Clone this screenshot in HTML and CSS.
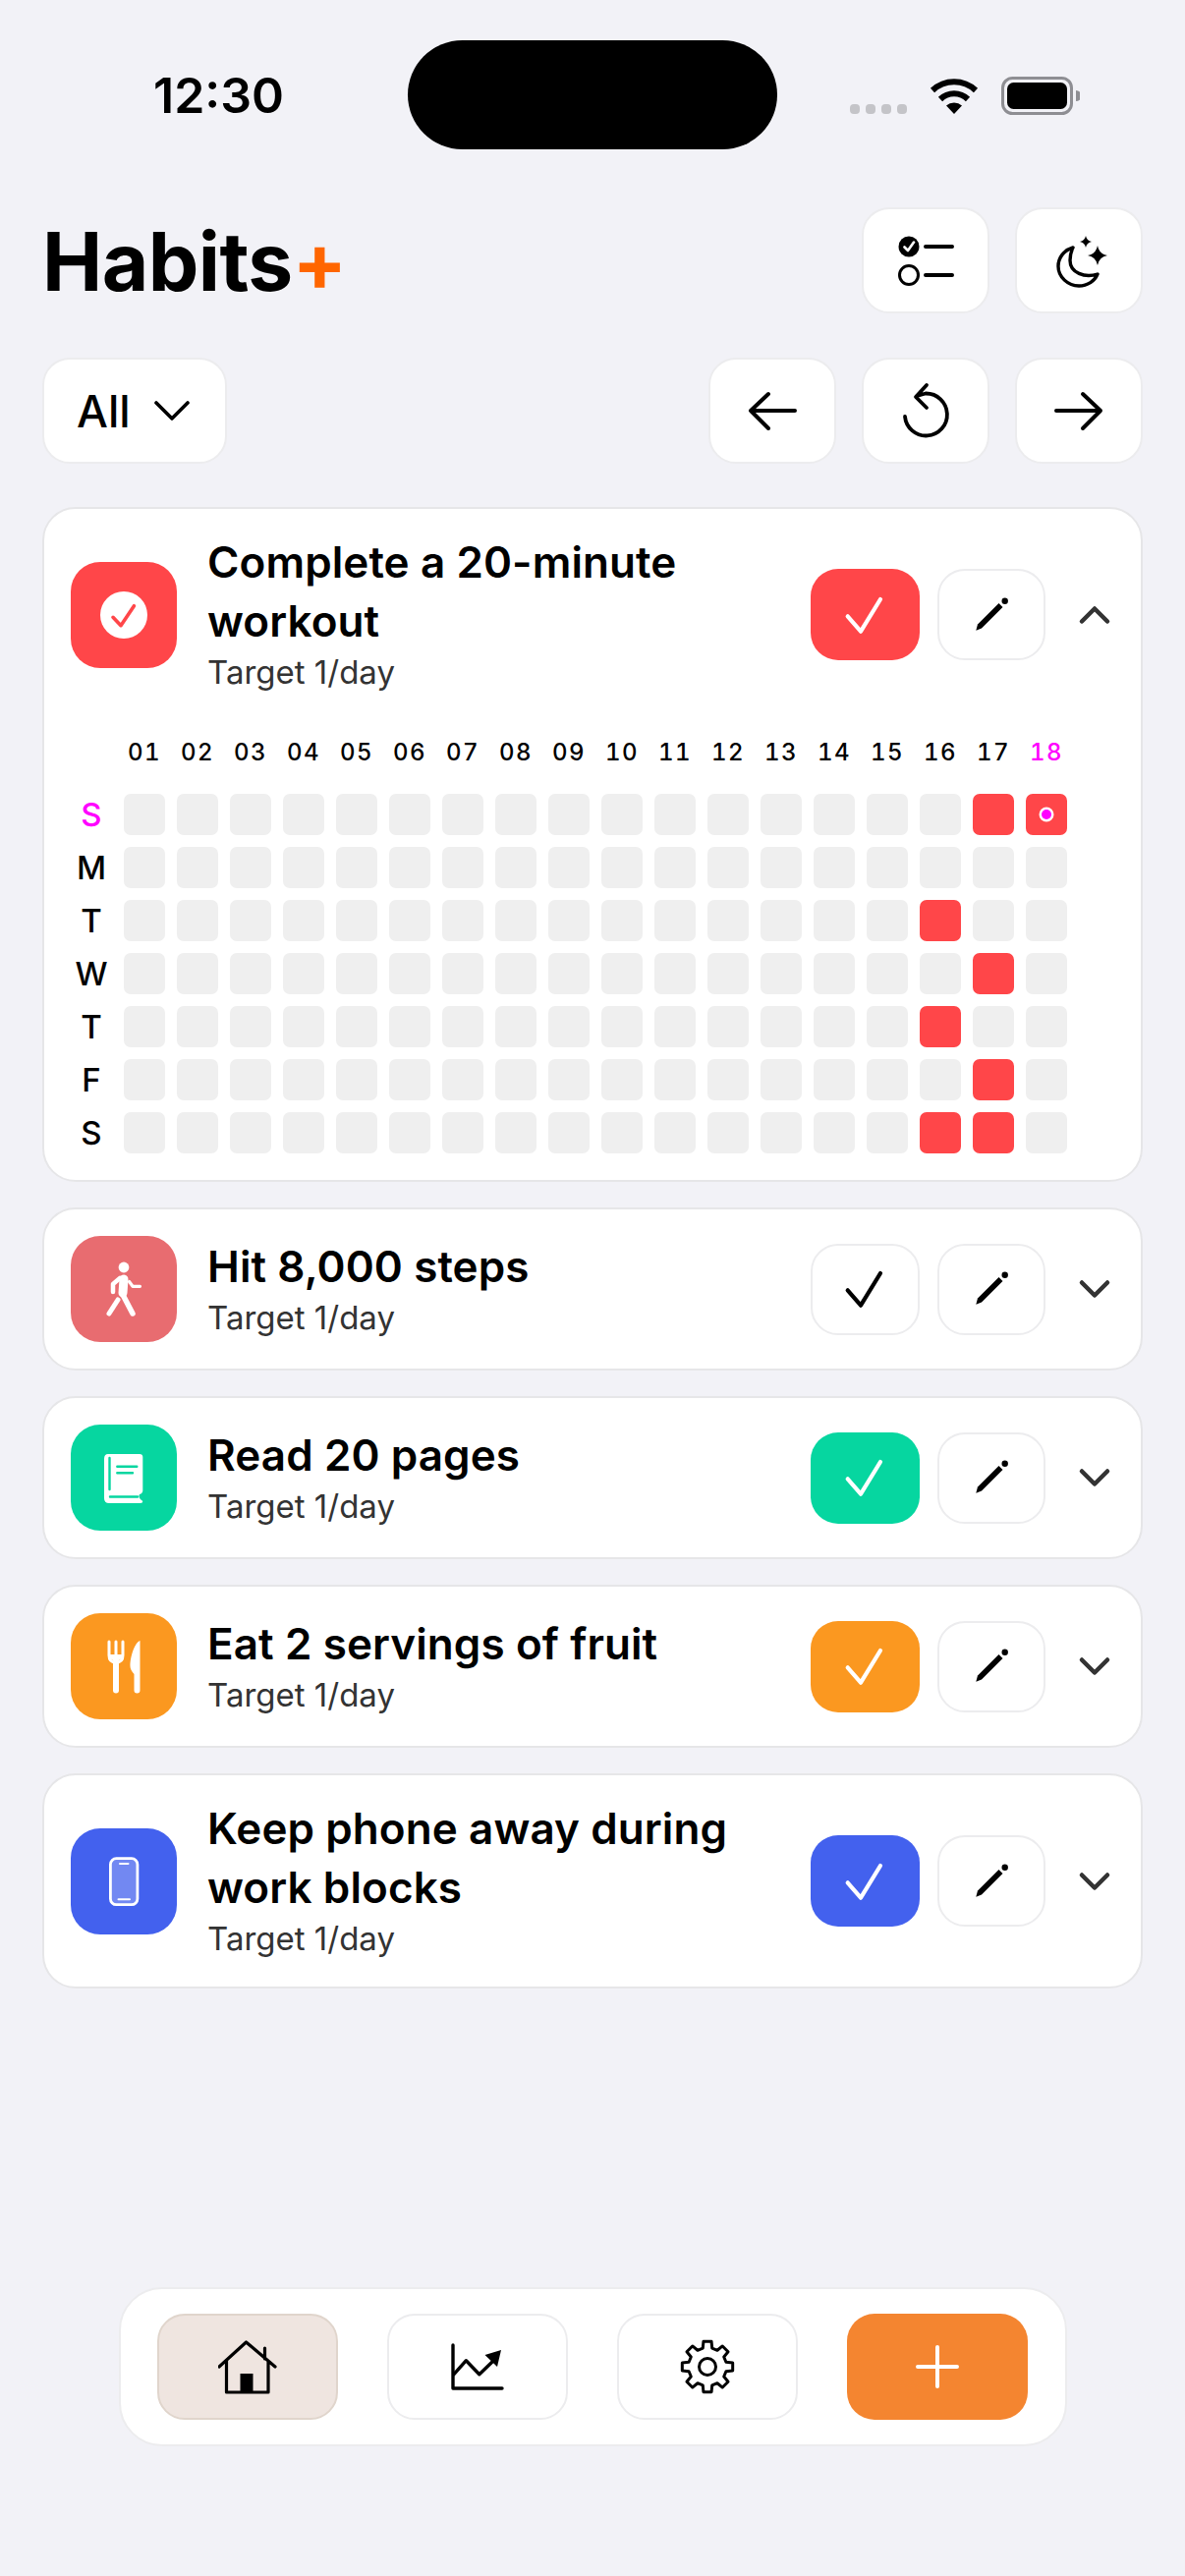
FILE: index.html
```html
<!DOCTYPE html>
<html lang="en">
<head>
  <meta charset="UTF-8">
  <meta name="viewport" content="width=device-width, initial-scale=1">
  <title>Habits+</title>
  <link rel="stylesheet" href="styles.css">
</head>
<body>
  <svg class="sprites" width="0" height="0">
    <symbol id="tick" viewBox="0 0 60 60"><path d="M11.7 31.3 25 46.7 45 14" fill="none" stroke="currentColor" stroke-width="4.2" stroke-linecap="round" stroke-linejoin="round"/></symbol>
    <symbol id="pencil" viewBox="0 0 60 60"><path d="M14.3 45.700 16 39.500 37.500 18 41.500 22 20 43.500Z" fill="currentColor"/><circle cx="43.700" cy="15.700" r="3.200" fill="currentColor"/></symbol>
    <symbol id="chev-down" viewBox="0 0 40 24"><path d="M7 5.500 20 18.500 33 5.500" fill="none" stroke="currentColor" stroke-width="4.500" stroke-linecap="round" stroke-linejoin="round"/></symbol>
    <symbol id="chev-up" viewBox="0 0 40 24"><path d="M7 18.500 20 5.500 33 18.500" fill="none" stroke="currentColor" stroke-width="4.500" stroke-linecap="round" stroke-linejoin="round"/></symbol>
  </svg>

  <div class="status">
    <div class="time">12:30</div>
    <div class="island"></div>
    <div class="signal"><span></span><span></span><span></span><span></span></div>
    <svg class="wifi" width="50" height="37" viewBox="0 0 50 37">
      <path d="M3 13A32 32 0 0 1 47 13M11 22A20 20 0 0 1 39 22" fill="none" stroke="#000" stroke-width="6"/>
      <path d="M25 37 17 28.500A12 12 0 0 1 33 28.500Z"/>
    </svg>
    <svg class="battery" width="80" height="39" viewBox="0 0 80 39">
      <rect x="1.500" y="1.500" width="70" height="36" rx="10" fill="none" stroke="#8e8e93" stroke-width="3"/>
      <rect x="6" y="6" width="61" height="27" rx="6.500"/>
      <path d="M76 14a5 5 0 0 1 0 11Z" fill="#8e8e93"/>
    </svg>
  </div>

  <main>
    <header class="top-row">
      <h1 class="logo">Habits<span>+</span></h1>
      <div class="btn-group">
        <button class="btn">
          <svg width="60" height="60" viewBox="0 0 60 60">
            <circle cx="13" cy="16" r="10.500"/>
            <path d="M8.500 16.500 12 20 18 11.500" fill="none" stroke="#fff" stroke-width="2.600" stroke-linecap="round" stroke-linejoin="round"/>
            <circle cx="13" cy="45" r="9.500" fill="none" stroke="#000" stroke-width="3"/>
            <path d="M30 16H57M30 45H57" stroke="#000" stroke-width="4" stroke-linecap="round"/>
          </svg>
        </button>
        <button class="btn">
          <svg width="60" height="60" viewBox="0 0 60 60">
            <path d="M24 17C14 20 9 28 9 36 9 47 19 56 30 56 39 56 46 51 49 44 36 48 21 43 21 30 21 25 22 21 24 17Z" fill="none" stroke="#000" stroke-width="3.400" stroke-linejoin="round"/>
            <path d="M49 15Q50.500 23.500 59 25 50.500 26.500 49 35 47.500 26.500 39 25 47.500 23.500 49 15Z"/>
            <path d="M37 5Q38 10 43 11 38 12 37 17 36 12 31 11 36 10 37 5Z"/>
          </svg>
        </button>
      </div>
    </header>

    <div class="top-row second">
      <button class="btn filter">All
        <svg width="36" height="22" viewBox="0 0 36 22"><path d="M2 3 18 19 34 3" fill="none" stroke="#000" stroke-width="3.600" stroke-linecap="round" stroke-linejoin="round"/></svg>
      </button>
      <div class="btn-group">
        <button class="btn">
          <svg width="60" height="60" viewBox="0 0 60 60"><path d="M53 30H8M26 13 8 30 26 48" fill="none" stroke="#000" stroke-width="4" stroke-linecap="round" stroke-linejoin="round"/></svg>
        </button>
        <button class="btn">
          <svg width="60" height="60" viewBox="0 0 60 60"><path d="M9 36A21.500 21.500 0 1 0 30 12.500L21 15M31 4 20 16 31 27" fill="none" stroke="#000" stroke-width="3.800" stroke-linecap="round" stroke-linejoin="round"/></svg>
        </button>
        <button class="btn">
          <svg width="60" height="60" viewBox="0 0 60 60"><path d="M7 30H52M34 13 52 30 34 48" fill="none" stroke="#000" stroke-width="4" stroke-linecap="round" stroke-linejoin="round"/></svg>
        </button>
      </div>
    </div>

    <section class="habits">
      <article class="card">
        <div class="habit-row">
          <div class="habit-icon red">
            <svg width="108" height="108" viewBox="0 0 108 108"><circle cx="54" cy="54" r="24" fill="#fff"/><path d="M43 56.300 51 64.700 64.400 44.700" fill="none" stroke="#ff4649" stroke-width="3.600" stroke-linecap="round" stroke-linejoin="round"/></svg>
          </div>
          <div class="habit-text">
            <h2>Complete a 20-minute workout</h2>
            <p>Target 1/day</p>
          </div>
          <button class="check red"><svg width="60" height="60"><use href="#tick"/></svg></button>
          <button class="edit"><svg width="60" height="60"><use href="#pencil"/></svg></button>
          <div class="toggle"><svg width="40" height="24"><use href="#chev-up"/></svg></div>
        </div>

        <div class="heatmap">
          <span></span>
          <span class="date">01</span><span class="date">02</span><span class="date">03</span><span class="date">04</span><span class="date">05</span><span class="date">06</span><span class="date">07</span><span class="date">08</span><span class="date">09</span><span class="date">10</span><span class="date">11</span><span class="date">12</span><span class="date">13</span><span class="date">14</span><span class="date">15</span><span class="date">16</span><span class="date">17</span><span class="date today">18</span>

          <span class="day today">S</span>
          <i></i><i></i><i></i><i></i><i></i><i></i><i></i><i></i><i></i><i></i><i></i><i></i><i></i><i></i><i></i><i></i><i class="done"></i><i class="done now"></i>

          <span class="day">M</span>
          <i></i><i></i><i></i><i></i><i></i><i></i><i></i><i></i><i></i><i></i><i></i><i></i><i></i><i></i><i></i><i></i><i></i><i></i>

          <span class="day">T</span>
          <i></i><i></i><i></i><i></i><i></i><i></i><i></i><i></i><i></i><i></i><i></i><i></i><i></i><i></i><i></i><i class="done"></i><i></i><i></i>

          <span class="day">W</span>
          <i></i><i></i><i></i><i></i><i></i><i></i><i></i><i></i><i></i><i></i><i></i><i></i><i></i><i></i><i></i><i></i><i class="done"></i><i></i>

          <span class="day">T</span>
          <i></i><i></i><i></i><i></i><i></i><i></i><i></i><i></i><i></i><i></i><i></i><i></i><i></i><i></i><i></i><i class="done"></i><i></i><i></i>

          <span class="day">F</span>
          <i></i><i></i><i></i><i></i><i></i><i></i><i></i><i></i><i></i><i></i><i></i><i></i><i></i><i></i><i></i><i></i><i class="done"></i><i></i>

          <span class="day">S</span>
          <i></i><i></i><i></i><i></i><i></i><i></i><i></i><i></i><i></i><i></i><i></i><i></i><i></i><i></i><i></i><i class="done"></i><i class="done"></i><i></i>
        </div>
      </article>

      <article class="card">
        <div class="habit-row">
          <div class="habit-icon rose">
            <svg width="108" height="108" viewBox="0 0 108 108" fill="none" stroke="#fff" stroke-linecap="round" stroke-linejoin="round">
              <circle cx="54" cy="32" r="5.400" fill="#fff" stroke="none"/>
              <path d="M54 44 53 58" stroke-width="9"/>
              <path d="M52 58 63 79" stroke-width="5.500"/>
              <path d="M48 65 39 79" stroke-width="5"/>
              <path d="M50 43 43 49 43 57" stroke-width="4.500"/>
              <path d="M59.500 46.500 63 51.300H70.500" stroke-width="3.200"/>
            </svg>
          </div>
          <div class="habit-text">
            <h2>Hit 8,000 steps</h2>
            <p>Target 1/day</p>
          </div>
          <button class="check"><svg width="60" height="60"><use href="#tick"/></svg></button>
          <button class="edit"><svg width="60" height="60"><use href="#pencil"/></svg></button>
          <div class="toggle"><svg width="40" height="24"><use href="#chev-down"/></svg></div>
        </div>
      </article>

      <article class="card">
        <div class="habit-row">
          <div class="habit-icon green">
            <svg width="108" height="108" viewBox="0 0 108 108">
              <path d="M38 30H70Q73.300 30 73.300 33V67Q73.300 70 70 71 68 74.500 73.300 78 73.300 80 71 80H39Q34 80 34 75V35Q34 30 38 30Z" fill="#fff"/>
              <path d="M39.500 34V66M40 73.500H68M47.300 42.700H67.300M47.300 49.300H63" fill="none" stroke="#06d6a0" stroke-width="2.400" stroke-linecap="round"/>
            </svg>
          </div>
          <div class="habit-text">
            <h2>Read 20 pages</h2>
            <p>Target 1/day</p>
          </div>
          <button class="check green"><svg width="60" height="60"><use href="#tick"/></svg></button>
          <button class="edit"><svg width="60" height="60"><use href="#pencil"/></svg></button>
          <div class="toggle"><svg width="40" height="24"><use href="#chev-down"/></svg></div>
        </div>
      </article>

      <article class="card">
        <div class="habit-row">
          <div class="habit-icon orange">
            <svg width="108" height="108" viewBox="0 0 108 108">
              <path d="M39 29V43Q39 50 46 50 53 50 53 43V29M46 29V50" fill="none" stroke="#fff" stroke-width="3" stroke-linecap="round"/>
              <path d="M40 42H52V46L46 50 40 46Z" fill="#fff"/>
              <path d="M46 50V78.500" stroke="#fff" stroke-width="6" stroke-linecap="round"/>
              <path d="M70.500 28C65 30 60.500 44 60.500 54 60.500 58 64.500 62 64.500 62V78.500A3 3 0 0 0 70.500 78.500Z" fill="#fff"/>
            </svg>
          </div>
          <div class="habit-text">
            <h2>Eat 2 servings of fruit</h2>
            <p>Target 1/day</p>
          </div>
          <button class="check orange"><svg width="60" height="60"><use href="#tick"/></svg></button>
          <button class="edit"><svg width="60" height="60"><use href="#pencil"/></svg></button>
          <div class="toggle"><svg width="40" height="24"><use href="#chev-down"/></svg></div>
        </div>
      </article>

      <article class="card">
        <div class="habit-row">
          <div class="habit-icon blue">
            <svg width="108" height="108" viewBox="0 0 108 108">
              <rect x="40.400" y="30.700" width="27.500" height="47" rx="6" fill="#fff" fill-opacity=".25" stroke="#fff" stroke-width="2.800"/>
              <path d="M50 36H58.500M48.500 72.300H60" stroke="#fff" stroke-width="2" stroke-linecap="round"/>
            </svg>
          </div>
          <div class="habit-text">
            <h2>Keep phone away during work blocks</h2>
            <p>Target 1/day</p>
          </div>
          <button class="check blue"><svg width="60" height="60"><use href="#tick"/></svg></button>
          <button class="edit"><svg width="60" height="60"><use href="#pencil"/></svg></button>
          <div class="toggle"><svg width="40" height="24"><use href="#chev-down"/></svg></div>
        </div>
      </article>
    </section>
  </main>

  <nav class="tabbar">
    <button class="tab active">
      <svg width="60" height="60" viewBox="0 0 60 60" fill="none" stroke="#000" stroke-width="3.200" stroke-linecap="round" stroke-linejoin="round">
        <path d="M1 30 28.500 5 58 30M8.500 24V56H51V24M47.500 11V22"/>
        <rect x="22.500" y="37" width="13" height="19" fill="#000" stroke="none"/>
      </svg>
    </button>
    <button class="tab">
      <svg width="60" height="60" viewBox="0 0 60 60" fill="none" stroke="#000" stroke-linecap="round" stroke-linejoin="round">
        <path d="M5 8V52H55" stroke-width="3.400"/>
        <path d="M6 37.700 18.400 23.700 31.800 37.700 45.800 24.300" stroke-width="3.400"/>
        <path d="M54 13 37.500 18 50 30Z" fill="#000" stroke="none"/>
      </svg>
    </button>
    <button class="tab">
      <svg width="60" height="60" viewBox="-30 -30 60 60" fill="none" stroke="#000" stroke-width="3" stroke-linejoin="round">
        <path d="M-4.720-18.920-4.070-25.680 4.070-25.680 4.720-18.920 10.040-16.720 15.280-21.040 21.040-15.280 16.720-10.040 18.920-4.720 25.680-4.070 25.680 4.070 18.920 4.720 16.720 10.040 21.040 15.280 15.280 21.040 10.040 16.720 4.720 18.920 4.070 25.680-4.070 25.680-4.720 18.920-10.040 16.720-15.280 21.040-21.040 15.280-16.720 10.040-18.920 4.720-25.680 4.070-25.680-4.070-18.920-4.720-16.720-10.040-21.040-15.280-15.280-21.040-10.040-16.720Z"/>
        <circle r="8.500"/>
      </svg>
    </button>
    <button class="tab add">
      <svg width="60" height="60" viewBox="0 0 60 60"><path d="M30 10V50M10 30H50" stroke="#fff" stroke-width="4" stroke-linecap="round"/></svg>
    </button>
  </nav>
</body>
</html>
```

FILE: styles.css
```css
:root {
  --bg: #f2f2f7;
  --text: #000;
  --muted: #333;
  --border: #ececee;
  --card-border: #e6e6e8;
  --red: #ff4649;
  --rose: #e86c70;
  --green: #06d6a0;
  --orange: #fb9820;
  --blue: #4361ee;
  --today: #ff00ff;
  --cell: #efefef;
}

* {
  box-sizing: border-box;
}

body {
  margin: 0;
  min-height: 100vh;
  display: flex;
  flex-direction: column;
  background: var(--bg);
  color: var(--text);
  font-family: Inter, "Liberation Sans", sans-serif;
}

button {
  font-family: inherit;
  color: inherit;
  padding: 0;
  cursor: pointer;
}

svg {
  display: block;
}

.sprites {
  position: absolute;
}

/* status bar */
.status {
  height: 152px;
  margin-bottom: 59px;
  padding: 41px 0 0 156px;
  display: flex;
  align-items: flex-start;
}

.time {
  width: 259px;
  margin-top: 31px;
  font-size: 50px;
  line-height: 50px;
  font-weight: 600;
}

.island {
  width: 376px;
  height: 111px;
  border-radius: 56px;
  background: #000;
}

.signal {
  display: flex;
  gap: 6px;
  margin: 65px 23px 0 74px;
}

.signal span {
  width: 10px;
  height: 10px;
  border-radius: 4px;
  background: #c4c4c8;
}

.wifi {
  margin: 38px 23px 0 0;
}

.battery {
  margin-top: 37px;
}

/* header */
main {
  padding: 0 43px;
}

.top-row {
  display: flex;
  justify-content: space-between;
  align-items: center;
  margin-bottom: 45px;
}

.top-row.second {
  margin-bottom: 44px;
}

.logo {
  margin: 0;
  padding-top: 3px;
  font-size: 82px;
  line-height: 105px;
  font-weight: 700;
  letter-spacing: -.6px;
}

.logo span {
  color: #ff6600;
}

.btn-group {
  display: flex;
  gap: 26px;
}

.btn {
  width: 130px;
  height: 108px;
  display: flex;
  align-items: center;
  justify-content: center;
  background: #fff;
  border: 2px solid var(--border);
  border-radius: 28px;
}

.filter {
  width: 188px;
  justify-content: flex-start;
  padding-left: 33px;
  gap: 24px;
  font-size: 45px;
  font-weight: 500;
}

/* habit cards */
.habits {
  display: flex;
  flex-direction: column;
  gap: 26px;
}

.card {
  padding: 27px;
  background: #fff;
  border: 2px solid var(--card-border);
  border-radius: 34px;
}

.habit-row {
  display: flex;
  align-items: center;
}

.habit-icon {
  flex: none;
  width: 108px;
  height: 108px;
  border-radius: 30px;
}

.red { background: var(--red); }
.rose { background: var(--rose); }
.green { background: var(--green); }
.orange { background: var(--orange); }
.blue { background: var(--blue); }

.habit-text {
  flex: 1;
  margin: 0 28px 0 31px;
  padding-bottom: 1px;
}

.habit-text h2 {
  margin: -3px 0 0;
  font-size: 44px;
  line-height: 60px;
  font-weight: 590;
  letter-spacing: .1px;
}

.habit-text p {
  margin: 2px 0 0;
  font-size: 33px;
  line-height: 41px;
  color: var(--muted);
}

.check,
.edit {
  flex: none;
  height: 93px;
  display: flex;
  align-items: center;
  justify-content: center;
  border-radius: 28px;
  border: 2px solid var(--border);
  background: #fff;
}

.check {
  width: 111px;
  margin-right: 18px;
  color: #000;
}

.edit {
  width: 110px;
  color: #000;
}

.check.red,
.check.green,
.check.orange,
.check.blue {
  border: 0;
  color: #fff;
}

.check.red { background: var(--red); }
.check.green { background: var(--green); }
.check.orange { background: var(--orange); }
.check.blue { background: var(--blue); }

.toggle {
  flex: none;
  width: 40px;
  margin-left: 30px;
  color: var(--muted);
}

/* history grid */
.heatmap {
  display: grid;
  grid-template-columns: repeat(19, 42px);
  gap: 12px;
  margin-top: 44px;
}

.heatmap i {
  height: 42px;
  border-radius: 7px;
  background: var(--cell);
}

.heatmap i.done {
  background: var(--red);
}

.heatmap i.now {
  display: flex;
  align-items: center;
  justify-content: center;
}

.heatmap i.now::after {
  content: "";
  width: 10px;
  height: 10px;
  border-radius: 50%;
  background: var(--today);
  box-shadow: 0 0 0 2.5px #fff;
}

.date {
  height: 46px;
  padding-bottom: 16px;
  font-size: 24px;
  line-height: 32px;
  font-weight: 500;
  letter-spacing: 1.5px;
  font-variant-numeric: tabular-nums;
  text-align: center;
  white-space: nowrap;
}

.day {
  font-size: 33px;
  line-height: 42px;
  font-weight: 500;
  text-align: center;
}

.today {
  color: var(--today);
}

/* bottom nav */
.tabbar {
  width: 965px;
  margin: auto auto 132px;
  padding: 25px 0;
  display: flex;
  justify-content: center;
  gap: 50px;
  background: #fff;
  border: 2px solid var(--border);
  border-radius: 44px;
}

.tab {
  width: 184px;
  height: 108px;
  display: flex;
  align-items: center;
  justify-content: center;
  background: #fff;
  border: 2px solid var(--border);
  border-radius: 28px;
}

.tab.active {
  background: #efe5e0;
  border-color: #e0d5cc;
}

.tab.add {
  background: #f48530;
  border: 0;
}
```
